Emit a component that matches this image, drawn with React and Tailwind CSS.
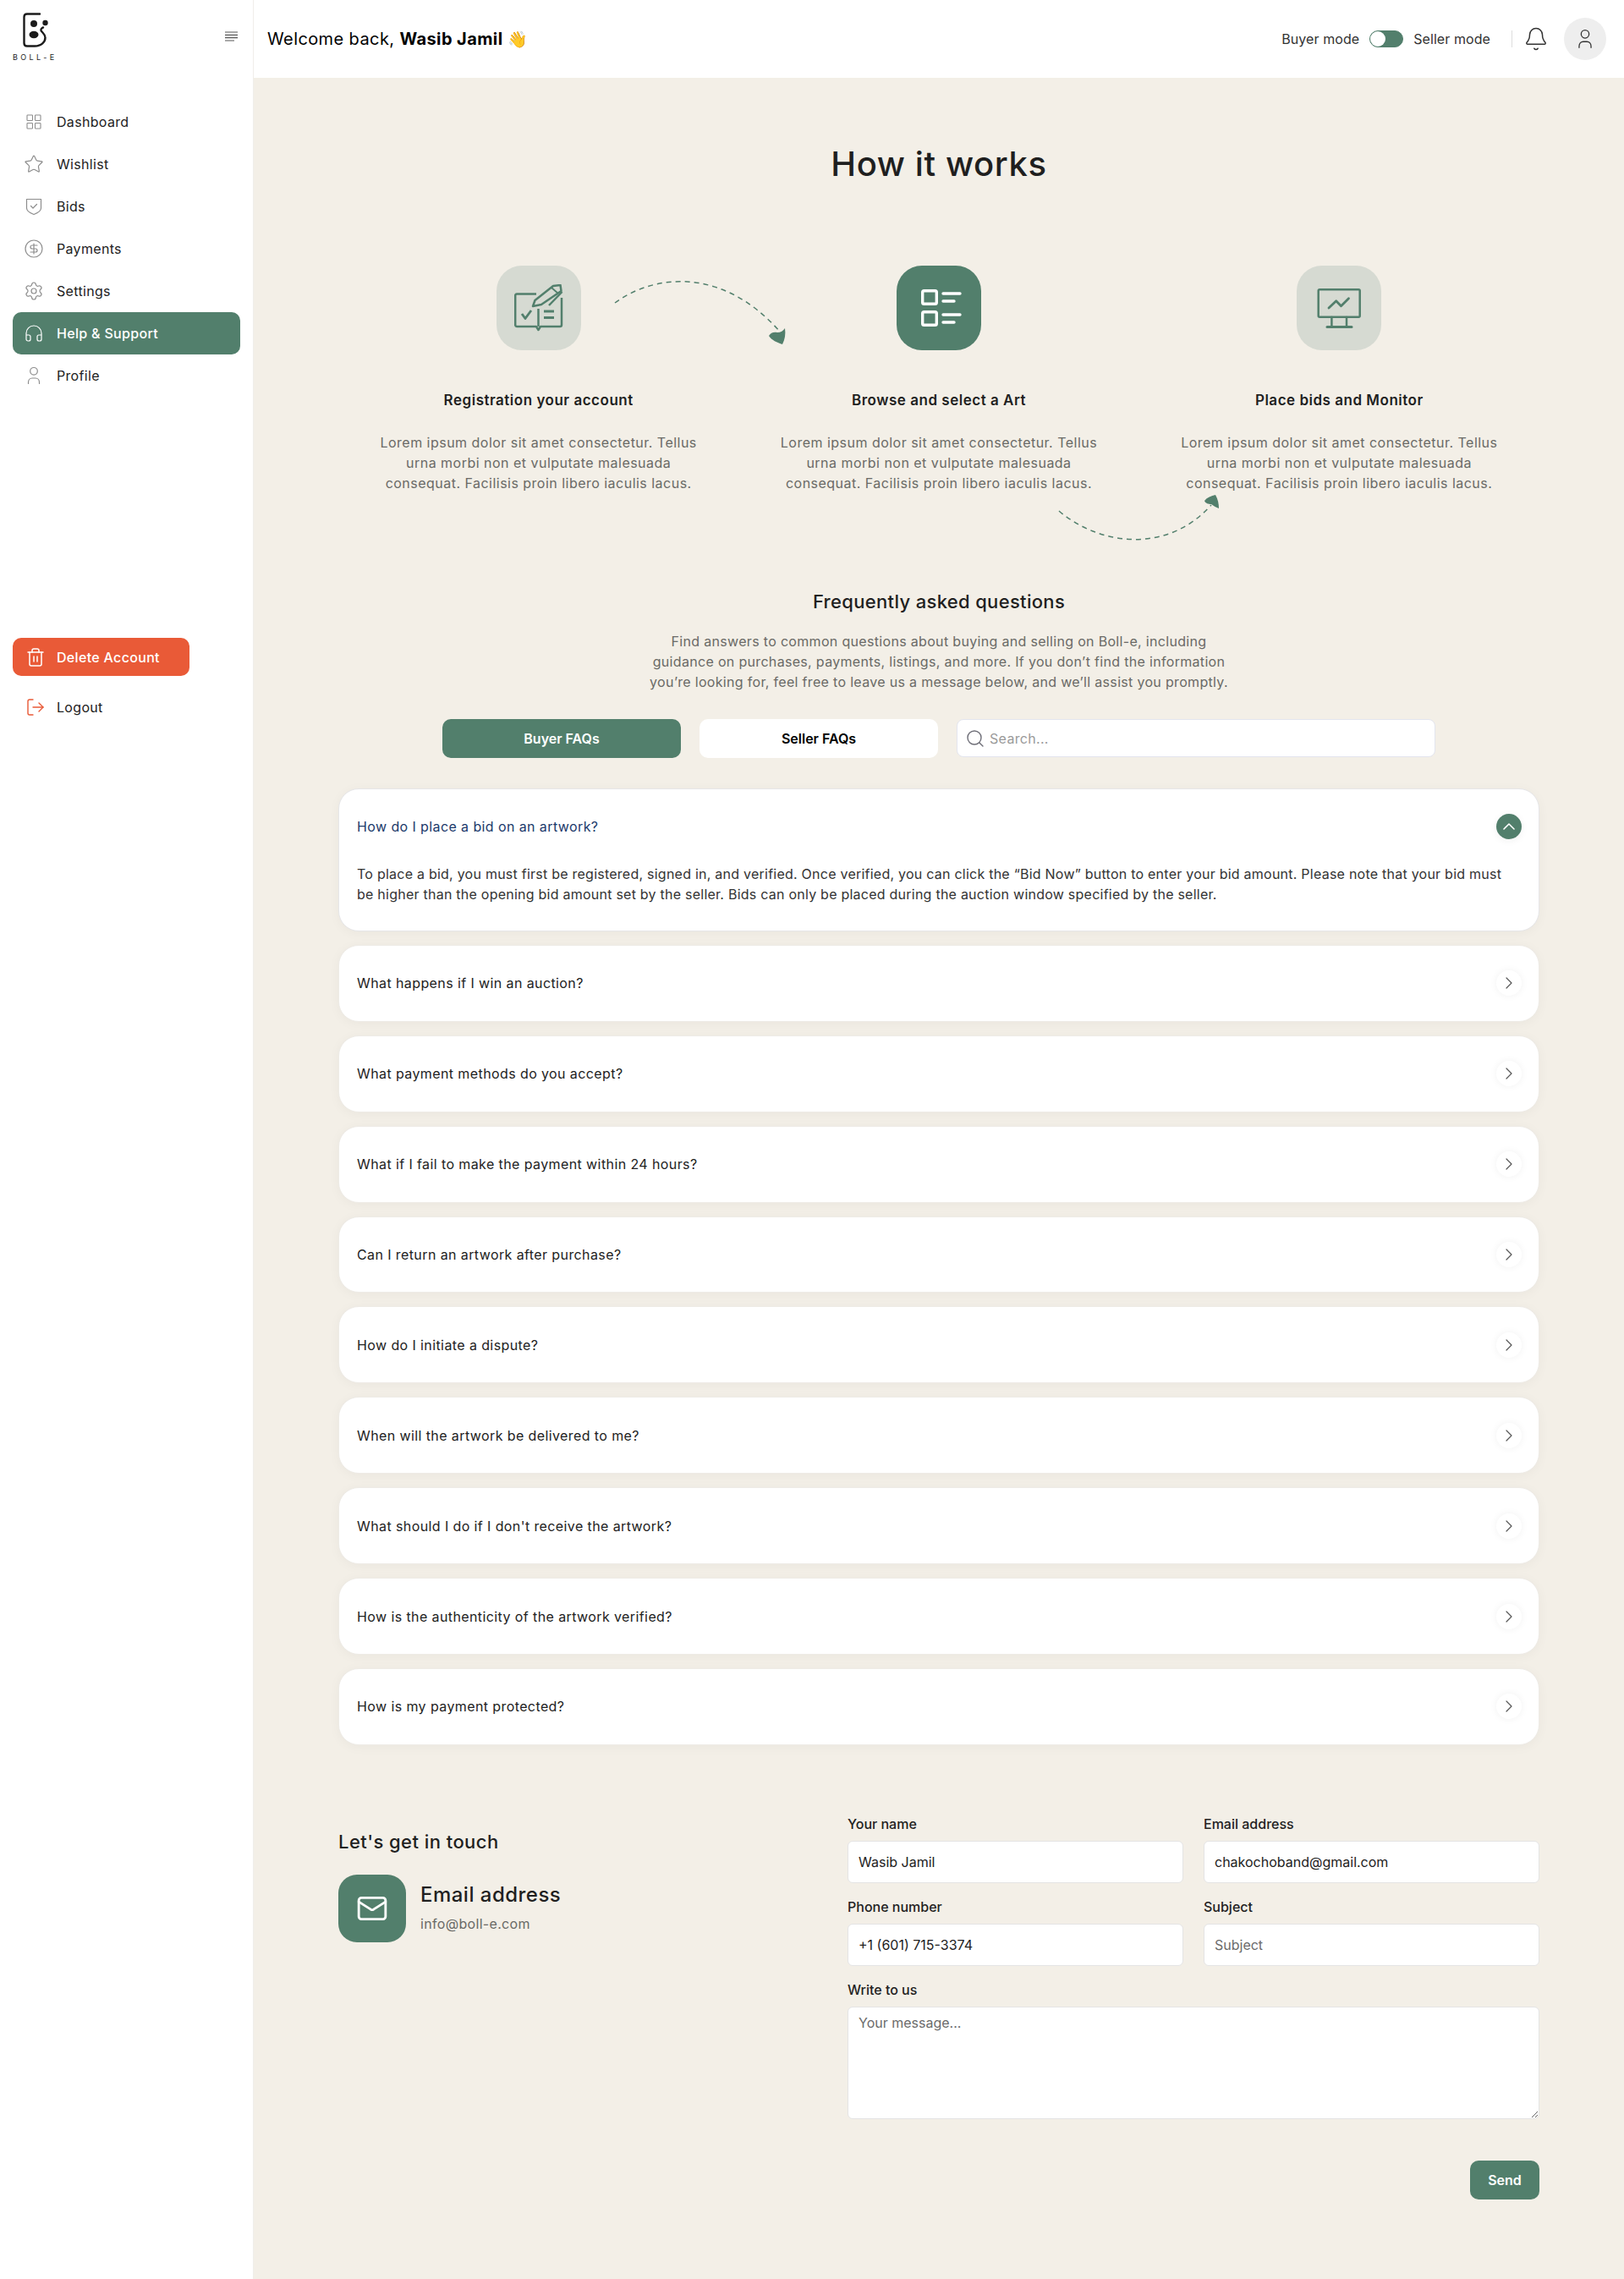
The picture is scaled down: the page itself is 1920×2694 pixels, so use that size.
import React from 'react';
import {
  Star, CircleDollarSign, Settings, Headphones, Trash2, LogOut,
  Bell, Search, Mail, ChevronRight, ChevronUp,
} from 'lucide-react';

const font = { fontFamily: 'Inter, "Noto Sans", sans-serif' };

function GridIcon({ className }) {
  return (
    <svg viewBox="0 0 24 24" fill="none" stroke="currentColor" strokeWidth="1.1" className={className}>
      <rect x="4" y="4" width="6.500" height="6.500" rx="0.8" />
      <rect x="13.500" y="4" width="6.500" height="6.500" rx="0.8" />
      <rect x="4" y="13.500" width="6.500" height="6.500" rx="0.8" />
      <rect x="13.500" y="13.500" width="6.500" height="6.500" rx="0.8" />
    </svg>
  );
}

function ShieldIcon({ className }) {
  return (
    <svg viewBox="0 0 24 24" fill="none" stroke="currentColor" strokeWidth="1.200" strokeLinejoin="round" className={className}>
      <path d="M3.500 3.500H20.500V14C20.500 17.500 16 20 12 21.500C8 20 3.500 17.500 3.500 14Z" />
      <path d="M8.500 11.500L11 14L15.500 9.500" strokeLinecap="round" />
    </svg>
  );
}

function PersonIcon({ className }) {
  return (
    <svg viewBox="0 0 24 24" fill="none" stroke="currentColor" strokeWidth="1.200" strokeLinecap="round" className={className}>
      <circle cx="12" cy="6.800" r="4.300" />
      <path d="M5.500 21.500V20C5.500 17 7.500 15 10 15H14C16.500 15 18.500 17 18.500 20V21.500" />
    </svg>
  );
}

const navItems = [
  { label: 'Dashboard', icon: GridIcon },
  { label: 'Wishlist', icon: Star },
  { label: 'Bids', icon: ShieldIcon },
  { label: 'Payments', icon: CircleDollarSign },
  { label: 'Settings', icon: Settings },
  { label: 'Help & Support', icon: Headphones, active: true },
  { label: 'Profile', icon: PersonIcon },
];

const questions = [
  'What happens if I win an auction?',
  'What payment methods do you accept?',
  'What if I fail to make the payment within 24 hours?',
  'Can I return an artwork after purchase?',
  'How do I initiate a dispute?',
  'When will the artwork be delivered to me?',
  "What should I do if I don't receive the artwork?",
  'How is the authenticity of the artwork verified?',
  'How is my payment protected?',
];

const steps = [
  { title: 'Registration your account', icon: 'book' },
  { title: 'Browse and select a Art', icon: 'list', active: true },
  { title: 'Place bids and Monitor', icon: 'monitor' },
];

function Logo() {
  return (
    <div className="flex flex-col items-start w-[50px]">
      <svg viewBox="0 0 36 42" className="w-[36px] h-[42px] ml-[10px]" fill="none">
        <path d="M22 2.500H7C4.800 2.500 3.500 3.800 3.500 6V37C3.500 39.200 4.800 40.500 7 40.500H16C24 40.500 28.500 35.500 28.500 30.500C28.500 26 24.500 24.500 23.500 22C23 20.500 24.500 19 26 18.500"
          stroke="#1b1b1b" strokeWidth="2.400" strokeLinecap="round" strokeLinejoin="round" />
        <circle cx="15" cy="14" r="4" fill="#1b1b1b" />
        <ellipse cx="15" cy="27" rx="5.500" ry="4.200" fill="#1b1b1b" />
        <circle cx="28.500" cy="13" r="3.200" fill="#1b1b1b" />
      </svg>
      <span className="text-[9px] leading-[12px] tracking-[0.38em] text-[#222] mt-[6px] whitespace-nowrap">BOLL-E</span>
    </div>
  );
}

function Sidebar() {
  return (
    <aside className="w-[300px] shrink-0 bg-white border-r border-[#f0eeea] px-[15px]">
      <div className="h-[119px] flex items-start justify-between pt-[14px] pr-[3px]">
        <Logo />
        <svg viewBox="0 0 15 12" className="w-[15px] h-[12px] mt-[23px]" stroke="#555" strokeWidth="1.200">
          <path d="M0 1H15M0 4.300H15M0 7.600H15M0 11H11" />
        </svg>
      </div>
      <nav>
        {navItems.map((item) => {
          const Icon = item.icon;
          return (
            <div key={item.label}
              className={`h-[50px] pl-[13px] flex items-center gap-[15px] rounded-[10px] text-[16px] tracking-[0.02em] ${item.active ? 'bg-[#527f6c] text-white font-medium' : 'text-[#222]'}`}>
              <Icon className={`w-[24px] h-[24px] ${item.active ? 'text-white' : 'text-[#8d8d8d]'}`} strokeWidth={1.200} />
              {item.label}
            </div>
          );
        })}
      </nav>
      <button className="mt-[285px] w-[209px] h-[45px] pl-[15px] flex items-center gap-[13px] rounded-[10px] bg-[#e95a37] text-white text-[16px] font-medium tracking-[0.02em]">
        <Trash2 className="w-[24px] h-[24px]" strokeWidth={1.500} />
        Delete Account
      </button>
      <div className="mt-[12px] h-[50px] pl-[15px] flex items-center gap-[13px] text-[16px] text-[#222] tracking-[0.02em]">
        <LogOut className="w-[24px] h-[24px] text-[#e95a37]" strokeWidth={1.400} />
        Logout
      </div>
    </aside>
  );
}

function Header() {
  return (
    <header className="h-[92px] bg-white flex items-center pl-[16px] pr-[21px]">
      <div className="text-[20px] text-black tracking-[0.02em]">
        Welcome back, <span className="font-bold">Wasib Jamil</span> <span className="text-[19px]">👋</span>
      </div>
      <div className="ml-auto flex items-center text-[16px] text-[#333] tracking-[0.005em]">
        <span>Buyer mode</span>
        <div className="mx-[12px] w-[40px] h-[20px] rounded-full bg-[#527f6c] border border-[#527f6c] flex items-center">
          <div className="w-[18px] h-[18px] rounded-full bg-white" />
        </div>
        <span>Seller mode</span>
        <div className="ml-[25px] w-px h-[20px] bg-[#ddd]" />
        <Bell className="ml-[13px] w-[30px] h-[30px] text-[#333]" strokeWidth={1.200} />
        <div className="ml-[18px] w-[50px] h-[50px] rounded-full bg-[#eeeeee] flex items-center justify-center">
          <PersonIcon className="w-[26px] h-[26px] text-[#333]" />
        </div>
      </div>
    </header>
  );
}

function StepIcon({ name, active }) {
  const stroke = active ? '#ffffff' : '#527f6c';
  return (
    <div className={`w-[100px] h-[100px] rounded-[30px] flex items-center justify-center ${active ? 'bg-[#527f6c]' : 'bg-[#d6dad2]'}`}>
      {name === 'book' && (
        <svg viewBox="0 0 58 56" className="w-[58px] h-[56px]" fill="none" stroke={stroke} strokeWidth="2.500" strokeLinejoin="round">
          <path d="M26 11.500H3C1.800 11.500 1.200 12.200 1.200 13.500V48C1.200 49.300 1.800 50 3 50H26L28.500 54L31 50H54C55.300 50 56 49.300 56 48V16" />
          <path d="M28.500 29V50" />
          <path d="M9 35L13 40.500L20 31" strokeWidth="2.800" />
          <path d="M35 32H47M35 39.500H47" strokeWidth="2.800" />
          <path d="M22 26L24.500 19L46 2L54.500 1L55.500 8L32 24Z" />
          <path d="M41 25L56.500 9" />
          <path d="M44 4L52 11" strokeWidth="1.800" />
        </svg>
      )}
      {name === 'list' && (
        <svg viewBox="0 0 60 60" className="w-[60px] h-[60px]" fill="none" stroke={stroke} strokeWidth="3.400" strokeLinecap="round">
          <rect x="10.700" y="9.700" width="16.600" height="15.600" rx="1.800" />
          <rect x="10.700" y="34.700" width="16.600" height="15.600" rx="1.800" />
          <path d="M35 13H55M35 22H48M35 38H55M35 47H48" />
        </svg>
      )}
      {name === 'monitor' && (
        <svg viewBox="0 0 60 60" className="w-[60px] h-[60px]" fill="none" stroke={stroke} strokeWidth="2.500" strokeLinecap="round" strokeLinejoin="round">
          <rect x="5.700" y="8.200" width="49" height="32.600" rx="1.500" />
          <path d="M18 30L26.700 21.700L32.500 27.700L41.500 18.700" strokeWidth="2.800" />
          <path d="M21.400 41V52M39 41V52" />
          <path d="M16 52.500H45" strokeWidth="3" />
        </svg>
      )}
    </div>
  );
}

function HowItWorks() {
  return (
    <section className="relative">
      <h1 className="text-[40px] leading-[42px] font-medium text-[#1f1f1f] text-center tracking-[0.015em]">How it works</h1>
      <div className="mt-[99px] grid grid-cols-3">
        {steps.map((step) => (
          <div key={step.title} className="flex flex-col items-center text-center">
            <StepIcon name={step.icon} active={step.active} />
            <h3 className="mt-[47px] text-[17px] leading-[24px] font-semibold text-[#1f1f1f] tracking-[0.03em]">{step.title}</h3>
            <p className="mt-[26px] w-[385px] text-[16px] leading-[24px] text-[#6a6a66] tracking-[0.03em]">
              Lorem ipsum dolor sit amet consectetur. Tellus urna morbi non et vulputate malesuada consequat. Facilisis proin libero iaculis lacus.
            </p>
          </div>
        ))}
      </div>
      {/* dashed arrows between the steps */}
      <svg viewBox="0 0 210 90" className="absolute left-[325px] top-[148px] w-[210px] h-[90px]" fill="none">
        <path d="M2 37C50 2 130 -5 197 71" stroke="#527f6c" strokeWidth="1.500" strokeDasharray="6 5" />
        <path d="M203 67C204 74 203 80 200 86C194 84 187 81 184 76C186 72 190 71 194 72C198 72 201 70 203 67Z" fill="#527f6c" />
      </svg>
      <svg viewBox="0 0 200 70" className="absolute left-[850px] top-[412px] w-[200px] h-[70px]" fill="none">
        <path d="M2 19C50 60 130 70 182 12" stroke="#527f6c" strokeWidth="1.500" strokeDasharray="6 5" />
        <path d="M187 0C190 5 191 11 191 16C188 15 185 13 182 11C179 11 175 10 174 7C177 3 182 1 187 0Z" fill="#527f6c" />
      </svg>
    </section>
  );
}

function FaqRow({ question }) {
  return (
    <div className="h-[90.900px] pl-[21px] pr-[20px] bg-white rounded-[24px] border border-[#eeebe6] shadow-[0_2px_14px_rgba(0,0,0,0.04)] flex items-center justify-between">
      <span className="text-[16px] text-[#222] tracking-[0.025em]">{question}</span>
      <span className="w-[30px] h-[30px] rounded-full bg-white shadow-[0_0_10px_rgba(0,0,0,0.06)] flex items-center justify-center">
        <ChevronRight className="w-[24px] h-[24px] text-[#555]" strokeWidth={1.200} />
      </span>
    </div>
  );
}

function Faq() {
  return (
    <section className="mt-[112px]">
      <h2 className="text-[22px] leading-[32px] font-medium text-[#1f1f1f] text-center tracking-[0.015em]">Frequently asked questions</h2>
      <p className="mt-[19px] mx-auto w-[700px] text-center text-[16px] leading-[24px] text-[#6a6a66] tracking-[0.02em]">
        Find answers to common questions about buying and selling on Boll-e, including guidance on purchases, payments, listings, and more. If you don’t find the information you’re looking for, feel free to leave us a message below, and we’ll assist you promptly.
      </p>
      <div className="mt-[32px] mx-auto w-[1174px] flex items-start gap-[22px]">
        <button className="w-[282px] h-[46px] rounded-[10px] bg-[#527f6c] text-white text-[16px] font-semibold">Buyer FAQs</button>
        <button className="w-[282px] h-[46px] rounded-[10px] bg-white text-black text-[16px] font-semibold">Seller FAQs</button>
        <div className="w-[566px] h-[45px] rounded-[8px] bg-white border border-[#e3e5ee] flex items-center pl-[9px] gap-[5px]">
          <Search className="w-[24px] h-[24px] text-[#6f6f78]" strokeWidth={1.400} />
          <input placeholder="Search..." className="flex-1 bg-transparent text-[16px] tracking-[0.02em] outline-none placeholder:text-[#9a9a9a]" />
        </div>
      </div>
      <div className="mt-[36px] flex flex-col gap-4">
        <div className="h-[168.900px] pl-[21px] pr-[20px] bg-white rounded-[24px] border border-[#e6e6e8] shadow-[0_2px_14px_rgba(0,0,0,0.04)]">
          <div className="h-[88px] flex items-center justify-between">
            <span className="text-[16px] text-[#1c3a6b] tracking-[0.025em]">How do I place a bid on an artwork?</span>
            <span className="w-[30px] h-[30px] rounded-full bg-[#527f6c] shadow-[0_2px_10px_rgba(0,0,0,0.06)] flex items-center justify-center">
              <ChevronUp className="w-[24px] h-[24px] text-white" strokeWidth={1.600} />
            </span>
          </div>
          <p className="text-[16px] leading-[24px] text-[#333] tracking-[0.015em]">
            To place a bid, you must first be registered, signed in, and verified. Once verified, you can click the “Bid Now” button to enter your bid amount. Please note that your bid must be higher than the opening bid amount set by the seller. Bids can only be placed during the auction window specified by the seller.
          </p>
        </div>
        {questions.map((q) => <FaqRow key={q} question={q} />)}
      </div>
    </section>
  );
}

function Field({ label, value, placeholder }) {
  return (
    <label className="block">
      <span className="block text-[16px] leading-[20px] font-medium text-[#222]">{label}</span>
      <input defaultValue={value} placeholder={placeholder}
        className="mt-[10px] w-full h-[50px] px-[12px] rounded-[6px] bg-white border border-[#e4e4e4] text-[16px] text-[#222] outline-none placeholder:text-[#6b6b6b]" />
    </label>
  );
}

function Contact() {
  return (
    <section className="mt-[83px] flex justify-between">
      <div className="pt-[15px]">
        <h2 className="text-[22px] leading-[32px] font-medium text-[#1f1f1f] tracking-[0.02em]">Let's get in touch</h2>
        <div className="mt-[23px] flex items-start gap-[17px]">
          <div className="w-[80px] h-[80px] rounded-[22px] bg-[#527f6c] flex items-center justify-center">
            <Mail className="w-[38px] h-[38px] text-white" strokeWidth={1.800} />
          </div>
          <div className="pt-[9px]">
            <div className="text-[24px] leading-[30px] font-medium text-[#1f1f1f] tracking-[0.02em]">Email address</div>
            <div className="mt-[9px] text-[16px] leading-[20px] text-[#6a6a66] tracking-[0.02em]">info@boll-e.com</div>
          </div>
        </div>
      </div>
      <form className="w-[818px]">
        <div className="grid grid-cols-2 gap-x-[24px] gap-y-[18px]">
          <Field label="Your name" value="Wasib Jamil" />
          <Field label="Email address" value="chakochoband@gmail.com" />
          <Field label="Phone number" value="+1 (601) 715-3374" />
          <Field label="Subject" placeholder="Subject" />
        </div>
        <label className="block mt-[18px]">
          <span className="block text-[16px] leading-[20px] font-medium text-[#222]">Write to us</span>
          <textarea placeholder="Your message..."
            className="block mt-[10px] w-full h-[133px] px-[12px] py-[6px] rounded-[6px] bg-white border border-[#e4e4e4] text-[16px] outline-none placeholder:text-[#6b6b6b]" />
        </label>
        <div className="mt-[49px] flex justify-end">
          <button type="button" className="w-[82px] h-[46px] rounded-[10px] bg-[#527f6c] text-white text-[16px] font-semibold">Send</button>
        </div>
      </form>
    </section>
  );
}

export default function App() {
  return (
    <div className="flex min-h-[2694px] bg-[#f3efe7]" style={font}>
      <Sidebar />
      <main className="flex-1 min-w-0">
        <Header />
        <div className="px-[100px] pt-[81px]">
          <HowItWorks />
          <Faq />
          <Contact />
        </div>
      </main>
    </div>
  );
}
